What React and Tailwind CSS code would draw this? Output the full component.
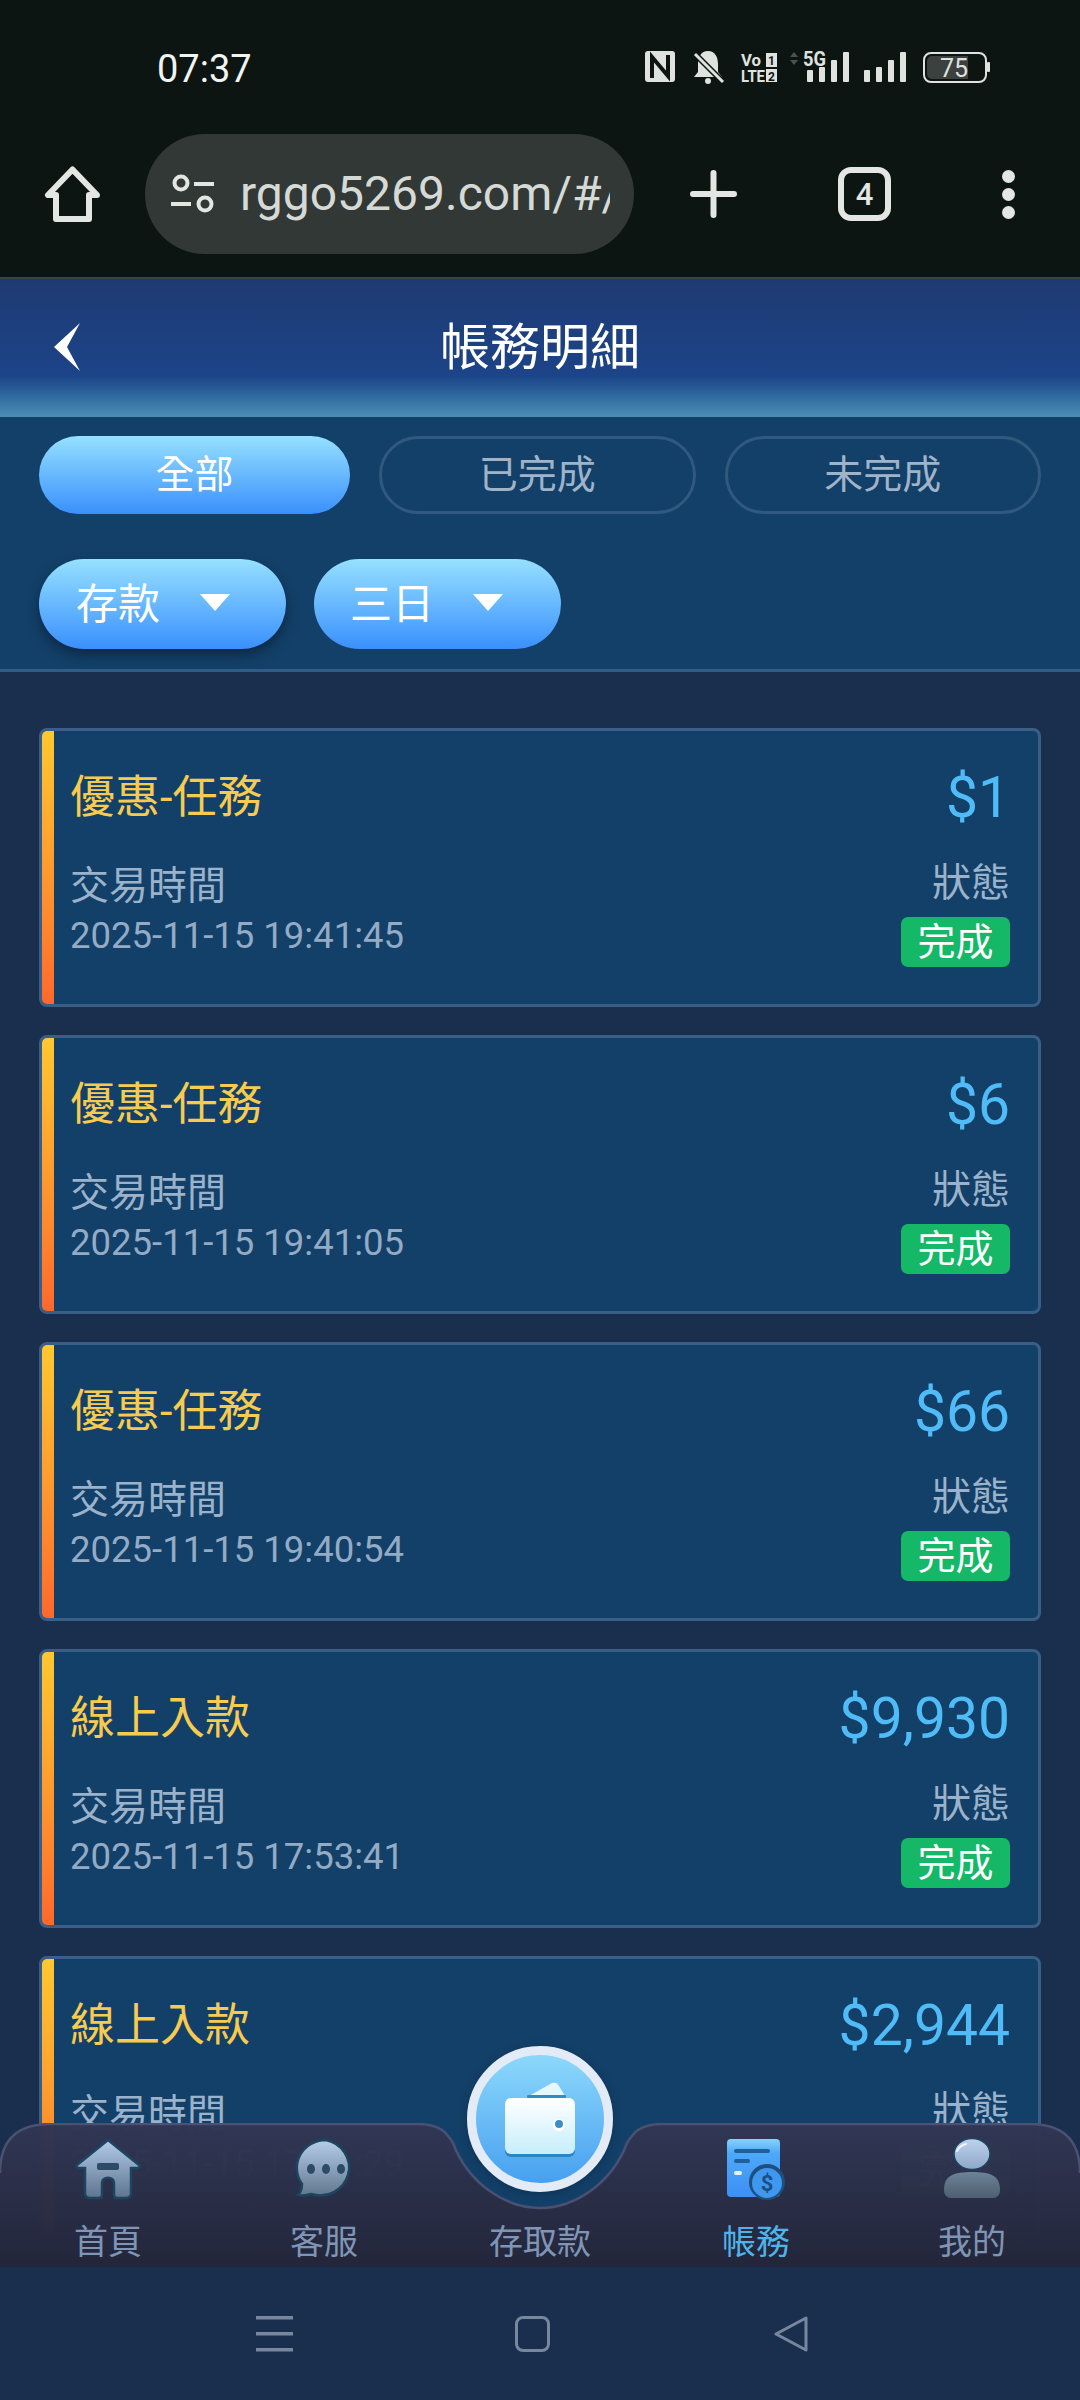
import React from "react";

const records = [
  { title: "優惠-任務", amount: "$1", time: "2025-11-15 19:41:45" },
  { title: "優惠-任務", amount: "$6", time: "2025-11-15 19:41:05" },
  { title: "優惠-任務", amount: "$66", time: "2025-11-15 19:40:54" },
  { title: "線上入款", amount: "$9,930", time: "2025-11-15 17:53:41" },
  { title: "線上入款", amount: "$2,944", time: "2025-11-15 17:51:29" },
];

function StatusIcons() {
  const bars = [
    [0, 72],
    [12, 69],
    [24, 62],
    [36, 54],
  ];
  return (
    <svg width="345" height="44" viewBox="645 47 345 44" fill="#dfe2df">
      {/* nfc */}
      <rect x="645" y="53" width="30" height="31" rx="3" />
      <path d="M652 80V59l16 19V57" fill="none" stroke="#0d1512" strokeWidth="4" />
      {/* muted bell */}
      <path d="M708 53c-7 0-10 6-10 13v8l-4 5h28l-4-5v-8c0-7-3-13-10-13z" />
      <circle cx="708" cy="83" r="3" />
      <path d="M694 55l29 29" stroke="#0d1512" strokeWidth="6" />
      <path d="M695 56l28 28" stroke="#dfe2df" strokeWidth="3" />
      {/* volte */}
      <text x="741" y="68" fontFamily="Roboto" fontWeight="700" fontSize="16" textLength="20" lengthAdjust="spacingAndGlyphs">Vo</text>
      <rect x="766" y="55" width="11" height="14" />
      <text x="771.5" y="67" fontFamily="Roboto" fontWeight="700" fontSize="12" textAnchor="middle" fill="#0d1512">1</text>
      <text x="741" y="84" fontFamily="Roboto" fontWeight="700" fontSize="16" textLength="24" lengthAdjust="spacingAndGlyphs">LTE</text>
      <rect x="766" y="71" width="11" height="13" />
      <text x="771.5" y="82.500" fontFamily="Roboto" fontWeight="700" fontSize="12" textAnchor="middle" fill="#0d1512">2</text>
      {/* 5g + signal */}
      <path d="M790 59l4-5 4 5zM790 62l4 5 4-5z" fill="#4c524f" />
      <text x="803" y="68" fontFamily="Roboto" fontWeight="700" fontSize="20" textLength="23" lengthAdjust="spacingAndGlyphs">5G</text>
      {bars.map(([x, top]) => (
        <rect key={x} x={807 + x} y={top} width="6" height={84 - top} rx="1" />
      ))}
      {bars.map(([x, top]) => (
        <rect key={x} x={864 + x} y={top} width="6" height={84 - top} rx="1" />
      ))}
      {/* battery */}
      <rect x="924" y="55" width="62" height="29" rx="7" fill="none" stroke="#dfe2df" strokeWidth="2" />
      <path d="M932 58h36v23h-36a5 5 0 0 1-5-5V63a5 5 0 0 1 5-5z" fill="#3c413f" />
      <rect x="987" y="64" width="3" height="10" rx="1" />
      <text x="954" y="79" fontFamily="Roboto" fontSize="25" textAnchor="middle">75</text>
    </svg>
  );
}

function BrowserBar() {
  return (
    <div className="bg-[#0d1512] border-b-2 border-[#3c423f]">
      <div className="h-[134px] flex items-center pl-[157px] pr-[90px]">
        <span className="mt-[4px] text-[38px] leading-none text-[#f2f4f2]">07:37</span>
        <div className="ml-auto">
          <StatusIcons />
        </div>
      </div>
      <div className="h-[143px] pb-[23px] flex items-center text-[#e3e6e3]">
        <svg className="ml-[44px]" width="57" height="56" viewBox="0 0 57 56" fill="none" stroke="currentColor" strokeWidth="6" strokeLinejoin="round">
          <path d="M28.500 3.500L4 29h8v24h33V29h8z" />
        </svg>
        <div className="ml-[44px] w-[489px] h-[120px] rounded-[60px] bg-[#323835] flex items-center overflow-hidden pl-[25px] pr-[24px]">
          <svg className="shrink-0" width="46" height="40" viewBox="0 0 46 40" fill="none" stroke="#e3e6e3" strokeWidth="4">
            <circle cx="11" cy="9" r="6.500" />
            <path d="M24 10h20M1 30h20" />
            <circle cx="35" cy="30" r="6.500" />
          </svg>
          <div className="ml-[24px] overflow-hidden whitespace-nowrap text-[48px] leading-[56px] text-[#d6dad6]">rggo5269.com/#/</div>
        </div>
        <svg className="ml-[56px]" width="47" height="48" viewBox="0 0 47 48" stroke="currentColor" strokeWidth="6" strokeLinecap="round">
          <path d="M23.500 3v42M3 24h41" />
        </svg>
        <div className="ml-[101px] w-[53px] h-[54px] rounded-[13px] border-[6px] border-[#e3e6e3] flex items-center justify-center text-[31px] font-medium leading-none">4</div>
        <div className="ml-[111px] flex flex-col gap-[5px]">
          <div className="w-[13px] h-[13px] rounded-full bg-[#e3e6e3]" />
          <div className="w-[13px] h-[13px] rounded-full bg-[#e3e6e3]" />
          <div className="w-[13px] h-[13px] rounded-full bg-[#e3e6e3]" />
        </div>
      </div>
    </div>
  );
}

function Header() {
  return (
    <div className="relative h-[138px] flex items-center justify-center bg-gradient-to-b from-[#1e3a72] via-[#1c4488] via-70% to-[#4a8fb6]">
      <svg className="absolute left-[54px] top-[44px]" width="27" height="48" viewBox="0 0 27 48" fill="#fff">
        <path d="M26 0L0 24l26 24-13-24z" />
      </svg>
      <h1 className="text-[50px] leading-none text-white">帳務明細</h1>
    </div>
  );
}

function Caret() {
  return (
    <svg width="30" height="17" viewBox="0 0 30 17" fill="#fff">
      <path d="M0 0h30L15 17z" />
    </svg>
  );
}

function Filters() {
  return (
    <div className="bg-[#134068] border-b-[3px] border-[#2f5d87] px-[39px] pt-[19px] pb-[20px]">
      <div className="flex gap-[29px]">
        <button className="w-[311px] h-[78px] rounded-full bg-gradient-to-b from-[#96e0ff] to-[#3a8ffb] text-[39px] text-white">全部</button>
        <button className="flex-1 h-[78px] rounded-full border-[3px] border-[#31587f] text-[39px] text-[#9fb3c9]">已完成</button>
        <button className="flex-1 h-[78px] rounded-full border-[3px] border-[#31587f] text-[39px] text-[#9fb3c9]">未完成</button>
      </div>
      <div className="mt-[45px] flex gap-[28px]">
        <button className="w-[247px] h-[90px] rounded-full bg-gradient-to-b from-[#96e0ff] to-[#3a8ffb] shadow-[0_6px_12px_rgba(8,22,45,0.55)] flex items-center pl-[37px] text-[42px] text-white">
          <span>存款</span>
          <span className="ml-[40px] -mt-[4px]"><Caret /></span>
        </button>
        <button className="w-[247px] h-[90px] rounded-full bg-gradient-to-b from-[#96e0ff] to-[#3a8ffb] flex items-center pl-[36px] text-[42px] text-white">
          <span>三日</span>
          <span className="ml-[39px] -mt-[4px]"><Caret /></span>
        </button>
      </div>
    </div>
  );
}

function RecordCard({ title, amount, time }) {
  return (
    <div className="shrink-0 h-[279px] flex overflow-hidden rounded-[8px] border-[3px] border-[#3a5f86] bg-[#134068]">
      <div className="w-[12px] bg-gradient-to-b from-[#ffc830] to-[#ff682c]" />
      <div className="flex-1 pl-[16px] pr-[28px] pt-[36px]">
        <div className="h-[60px] flex items-center justify-between">
          <span className="text-[45px] leading-none text-[#f6cb50]">{title}</span>
          <span className="text-[57px] leading-none text-[#4fbcf8]">{amount}</span>
        </div>
        <div className="mt-[32px] flex items-start justify-between">
          <div className="pt-[3px]">
            <div className="text-[39px] leading-[48px] text-[#9bb2cb]">交易時間</div>
            <div className="mt-[6px] text-[36.500px] leading-[40px] text-[#93abc5]">{time}</div>
          </div>
          <div className="flex flex-col items-end">
            <div className="text-[39px] leading-[48px] text-[#9bb2cb]">狀態</div>
            <div className="mt-[10px] w-[109px] h-[50px] rounded-[7px] bg-[#14b866] flex items-center justify-center text-[38px] leading-none text-white">完成</div>
          </div>
        </div>
      </div>
    </div>
  );
}

function HomeIcon() {
  return (
    <svg width="66" height="62" viewBox="0 0 66 62">
      <defs>
        <linearGradient id="homeFill" x1="0" y1="0" x2="0" y2="1">
          <stop offset="0" stopColor="#b2cbea" />
          <stop offset="1" stopColor="#5d748e" />
        </linearGradient>
      </defs>
      <path
        d="M33 2L2 27c-1 2 0 3 2 3h6v25c0 3 2 5 5 5h9c2 0 3-1 3-3V45c0-7 12-7 12 0v12c0 2 1 3 3 3h9c3 0 5-2 5-5V30h6c2 0 3-1 2-3z"
        fill="url(#homeFill)"
        stroke="#1d4560"
        strokeWidth="2.500"
      />
      <rect x="22" y="25" width="22" height="7" rx="2" fill="#2d4a66" />
    </svg>
  );
}

function ChatIcon() {
  return (
    <svg className="ml-[4px]" width="62" height="62" viewBox="0 0 62 62">
      <defs>
        <linearGradient id="chatFill" x1="0" y1="0" x2="0" y2="1">
          <stop offset="0" stopColor="#b6cdea" />
          <stop offset="1" stopColor="#62788f" />
        </linearGradient>
      </defs>
      <path
        d="M31 2a29 28 0 0 0-24 44c0 4-1 8-4 11 5 1 10 0 13-1a29 28 0 1 0 15-54z"
        fill="url(#chatFill)"
        stroke="#1d4560"
        strokeWidth="2.500"
      />
      <ellipse cx="16" cy="31" rx="4" ry="5" fill="#2d4a66" />
      <ellipse cx="31" cy="31" rx="4" ry="5" fill="#2d4a66" />
      <ellipse cx="46" cy="31" rx="4" ry="5" fill="#2d4a66" />
    </svg>
  );
}

function BillIcon() {
  return (
    <svg width="60" height="62" viewBox="0 0 60 62">
      <defs>
        <linearGradient id="billFill" x1="0" y1="0" x2="0" y2="1">
          <stop offset="0" stopColor="#86d2fb" />
          <stop offset="0.25" stopColor="#4da8f8" />
          <stop offset="1" stopColor="#3d8ff5" />
        </linearGradient>
      </defs>
      <rect x="1" y="1" width="53" height="58" rx="4" fill="url(#billFill)" />
      <rect x="8" y="11" width="36" height="4" rx="2" fill="#1f5f9c" />
      <rect x="8" y="21" width="16" height="4" rx="2" fill="#1f5f9c" />
      <rect x="8" y="33" width="8" height="4" rx="2" fill="#e5f5ff" />
      <circle cx="41" cy="44" r="18" fill="#1f4f7e" />
      <circle cx="41" cy="45" r="15" fill="#3f97ef" />
      <text x="41" y="53" textAnchor="middle" fontFamily="Roboto" fontWeight="700" fontSize="22" fill="#1c4f86">$</text>
    </svg>
  );
}

function PersonIcon() {
  return (
    <svg width="58" height="62" viewBox="0 0 58 62">
      <defs>
        <linearGradient id="headFill" x1="0" y1="0" x2="0" y2="1">
          <stop offset="0" stopColor="#bdd2ee" />
          <stop offset="1" stopColor="#8fa8c8" />
        </linearGradient>
        <linearGradient id="bodyFill" x1="0" y1="0" x2="0" y2="1">
          <stop offset="0" stopColor="#6d8398" />
          <stop offset="1" stopColor="#4d5f72" />
        </linearGradient>
      </defs>
      <ellipse cx="29" cy="16" rx="18" ry="15.500" fill="url(#headFill)" stroke="#1d4560" strokeWidth="1.500" />
      <path d="M14 13c2-4 5-6 9-7" fill="none" stroke="#eef5ff" strokeWidth="2" strokeLinecap="round" />
      <path d="M1 52c0-15 10-18 28-18s28 3 28 18c0 5-3 8-7 8H8c-4 0-7-3-7-8z" fill="url(#bodyFill)" />
    </svg>
  );
}

function WalletButton() {
  return (
    <div className="absolute left-[467px] -top-[77px] w-[146px] h-[146px] rounded-full border-[9px] border-[#e3ebf7] bg-gradient-to-b from-[#8cd8fb] to-[#47a0f0] flex items-center justify-center shadow-[0_2px_8px_rgba(10,35,70,0.5)]">
      <svg width="76" height="76" viewBox="0 0 76 76">
        <defs>
          <linearGradient id="walletFill" x1="0" y1="0" x2="0" y2="1">
            <stop offset="0" stopColor="#ffffff" />
            <stop offset="1" stopColor="#c6eefb" />
          </linearGradient>
        </defs>
        <path d="M27 15L50 2c3-1 6 0 7 3l6 10z" fill="#e7f7fe" />
        <rect x="25" y="14" width="39" height="3" rx="1" fill="#2f8fc4" />
        <rect x="3" y="18" width="70" height="58" rx="6" fill="#2b86c6" />
        <rect x="3" y="17" width="70" height="56" rx="6" fill="url(#walletFill)" />
        <circle cx="57" cy="44" r="6" fill="#ffffff" />
        <circle cx="57" cy="43" r="4" fill="#3d8dc6" />
      </svg>
    </div>
  );
}

function TabBar() {
  const tabs = [
    { label: "首頁", icon: <HomeIcon /> },
    { label: "客服", icon: <ChatIcon /> },
    { label: "存取款", icon: null },
    { label: "帳務", icon: <BillIcon />, active: true },
    { label: "我的", icon: <PersonIcon /> },
  ];
  return (
    <div className="absolute left-0 right-0 bottom-[133px] h-[144px]">
      <svg className="absolute inset-0" width="1080" height="144" viewBox="0 0 1080 144">
        <defs>
          <linearGradient id="barFill" x1="0" y1="0" x2="0" y2="1">
            <stop offset="0" stopColor="#313654" />
            <stop offset="1" stopColor="#23263a" />
          </linearGradient>
        </defs>
        <path
          d="M0 144V50Q0 1 50 1H418C440 1 447 10 453 20C468 60 505 85 540 85C575 85 612 60 627 20C633 10 640 1 662 1H1030Q1080 1 1080 50V144Z"
          fill="url(#barFill)"
          fillOpacity="0.985"
        />
        <path
          d="M0 50Q0 1 50 1H418C440 1 447 10 453 20C468 60 505 85 540 85C575 85 612 60 627 20C633 10 640 1 662 1H1030Q1080 1 1080 50"
          fill="none"
          stroke="#4a5172"
          strokeWidth="2.500"
        />
      </svg>
      <WalletButton />
      <div className="relative grid grid-cols-5 h-full">
        {tabs.map((tab) => (
          <div key={tab.label} className="flex flex-col items-center">
            <div className="h-[62px] mt-[15px] flex items-center justify-center">{tab.icon}</div>
            <div className={`mt-[22px] text-[34px] leading-[40px] ${tab.active ? "text-[#4fb3ea]" : "text-[#7f95b5]"}`}>{tab.label}</div>
          </div>
        ))}
      </div>
    </div>
  );
}

function SystemNav() {
  return (
    <div className="h-[133px] shrink-0 bg-[#1a2e4e] relative z-10 flex items-center pl-[256px]">
      <svg width="37" height="36" viewBox="0 0 37 36" fill="#77879d">
        <rect y="0" width="37" height="3.500" />
        <rect y="16" width="37" height="3.500" />
        <rect y="32" width="37" height="3.500" />
      </svg>
      <div className="ml-[222px] w-[35px] h-[36px] rounded-[8px] border-[3px] border-[#77879d]" />
      <svg className="ml-[224px]" width="34" height="36" viewBox="0 0 34 36" fill="none" stroke="#77879d" strokeWidth="3" strokeLinejoin="round">
        <path d="M32 2v32L2 18z" />
      </svg>
    </div>
  );
}

export default function App() {
  return (
    <div className="relative w-[1080px] h-[2400px] overflow-hidden flex flex-col bg-[#1a2e4e] font-['Roboto','Noto_Sans_CJK_TC',sans-serif]">
      <BrowserBar />
      <Header />
      <Filters />
      <div className="flex-1 min-h-0 overflow-hidden flex flex-col gap-[28px] px-[39px] pt-[56px]">
        {records.map((record) => (
          <RecordCard key={record.time} {...record} />
        ))}
      </div>
      <SystemNav />
      <TabBar />
    </div>
  );
}
